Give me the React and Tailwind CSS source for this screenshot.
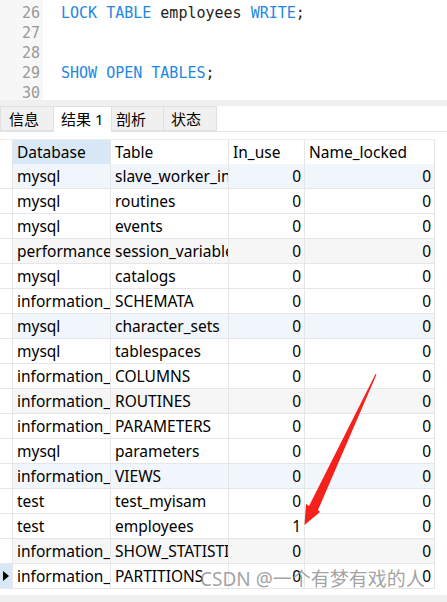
import React from 'react';

const rows = [
  ['mysql', 'slave_worker_info', '0', '0'],
  ['mysql', 'routines', '0', '0'],
  ['mysql', 'events', '0', '0'],
  ['performance_schema', 'session_variables', '0', '0'],
  ['mysql', 'catalogs', '0', '0'],
  ['information_schema', 'SCHEMATA', '0', '0'],
  ['mysql', 'character_sets', '0', '0'],
  ['mysql', 'tablespaces', '0', '0'],
  ['information_schema', 'COLUMNS', '0', '0'],
  ['information_schema', 'ROUTINES', '0', '0'],
  ['information_schema', 'PARAMETERS', '0', '0'],
  ['mysql', 'parameters', '0', '0'],
  ['information_schema', 'VIEWS', '0', '0'],
  ['test', 'test_myisam', '0', '0'],
  ['test', 'employees', '1', '0'],
  ['information_schema', 'SHOW_STATISTICS', '0', '0'],
  ['information_schema', 'PARTITIONS', '0', '0'],
];

const font = { fontFamily: '"Noto Sans", "Noto Sans CJK SC", sans-serif' };

const rowBg = (i) => {
  if (i % 6 === 0) return 'bg-[#f1f6fc]';
  if (i % 6 === 3) return 'bg-[#f6f6f6]';
  return 'bg-white';
};

const App = () => {
  return (
    <div className="relative w-[447px] h-[602px] bg-white overflow-hidden" style={font}>
      {/* editor */}
      <div className="flex h-[100px] font-['DejaVu_Sans_Mono',monospace] text-[15px] leading-[20px]">
        <div className="w-[43px] bg-[#f7f7f7] pt-[3px] pr-[3px] text-right text-[#9a9a9a]">
          <div>26</div>
          <div>27</div>
          <div>28</div>
          <div>29</div>
          <div>30</div>
        </div>
        <div className="pl-[18px] pt-[3px] text-[#222] whitespace-pre">
          <div>
            <span className="text-[#1e88e5]">LOCK TABLE</span> employees <span className="text-[#1e88e5]">WRITE</span>;
          </div>
          <div>&nbsp;</div>
          <div>&nbsp;</div>
          <div>
            <span className="text-[#1e88e5]">SHOW OPEN TABLES</span>;
          </div>
          <div>&nbsp;</div>
        </div>
      </div>

      <div className="h-[6px] bg-[#f0f0f0]" />

      {/* tabs */}
      <div className="flex h-[26px] border-b border-[#e2e2e2] text-[15px] text-black">
        <div className="w-[54px] border border-[#e0e0e0] bg-[#f0f0f0] pl-[8px] leading-[24px]">信息</div>
        <div className="w-[58px] border-t border-r border-[#e0e0e0] bg-white pl-[7px] leading-[24px] -mb-px">结果 1</div>
        <div className="w-[52px] border border-l-0 border-[#e0e0e0] bg-[#f0f0f0] pl-[4px] leading-[24px]">剖析</div>
        <div className="w-[53px] border border-l-0 border-[#e0e0e0] bg-[#f0f0f0] pl-[7px] leading-[24px]">状态</div>
      </div>

      {/* table */}
      <div className="mt-[7px] w-[435px] text-[15.5px] text-black">
        <div className="grid grid-cols-[13px_98px_118px_76px_130px] h-[25px] leading-[24px] border-t border-[#ececec]">
          <div className="border-b border-r border-[#e6e6e6]" />
          <div className="bg-[#d9e8f6] pl-[4px] border-b border-r border-[#e6e6e6]">Database</div>
          <div className="pl-[4px] border-b border-r border-[#e6e6e6]">Table</div>
          <div className="pl-[4px] border-b border-r border-[#e6e6e6]">In_use</div>
          <div className="pl-[4px] border-b border-r border-[#e6e6e6]">Name_locked</div>
        </div>
        {rows.map((r, i) => (
          <div key={i} className="grid grid-cols-[13px_98px_118px_76px_130px] h-[25px] leading-[24px]">
            <div
              className={`flex items-center justify-center border-b border-r border-[#e6e6e6] ${
                i === rows.length - 1 ? 'bg-[#d9e8f6]' : 'bg-white'
              }`}
            >
              {i === rows.length - 1 && (
                <svg width="6" height="10" viewBox="0 0 6 10">
                  <path d="M0 0 L6 5 L0 10 Z" fill="#000" />
                </svg>
              )}
            </div>
            <div className={`${rowBg(i)} pl-[4px] border-b border-r border-[#e6e6e6] overflow-hidden whitespace-nowrap`}>{r[0]}</div>
            <div className={`${rowBg(i)} pl-[4px] border-b border-r border-[#e6e6e6] overflow-hidden whitespace-nowrap`}>{r[1]}</div>
            <div className={`${rowBg(i)} pr-[3px] text-right border-b border-r border-[#e6e6e6]`}>{r[2]}</div>
            <div className={`${rowBg(i)} pr-[3px] text-right border-b border-r border-[#e6e6e6]`}>{r[3]}</div>
          </div>
        ))}
      </div>

      <div className="mt-[6px] h-[7px] bg-[#f0f0f0]" />

      {/* red arrow annotation */}
      <svg className="absolute left-0 top-0 pointer-events-none" width="447" height="602" viewBox="0 0 447 602">
        <path d="M375.5 374 L376.5 374.6 L318 510 L320 512 L304.5 525 L306 504 L309 506 Z" fill="#f5221b" />
      </svg>

      {/* watermark */}
      <div className="absolute left-[200px] top-[565px] text-[19px] text-[#8a8a8a]/80 whitespace-nowrap pointer-events-none">
        CSDN @一个有梦有戏的人
      </div>
    </div>
  );
};

export default App;
